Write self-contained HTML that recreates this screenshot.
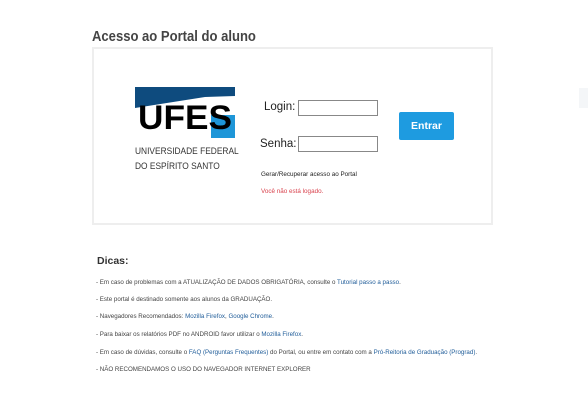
<!DOCTYPE html>
<html><head><meta charset="utf-8"><style>
body{margin:0;background:#fff;font-family:"Liberation Sans",sans-serif;width:588px;height:415px;overflow:hidden;position:relative}
.a{position:absolute}
h1{position:absolute;left:92px;top:28px;margin:0;font-size:15px;font-weight:bold;color:#444;transform:scaleX(0.87);transform-origin:left;white-space:nowrap}
.box{position:absolute;left:92px;top:47px;width:401px;height:178px;border:2px solid #eee;box-sizing:border-box}
.lbl{font-size:11.5px;color:#222}
.inp{position:absolute;width:78px;height:14px;border:1px solid #888;background:#fff}
.btn{position:absolute;left:399px;top:112px;width:55px;height:28px;background:#1e9be0;color:#fff;font-size:10.5px;font-weight:bold;text-align:center;line-height:28px;border-radius:2px}
.t{font-size:6.2px;color:#444;left:96px}
.l{color:#1f5c99}
</style></head><body>
<h1>Acesso ao Portal do aluno</h1>
<div class="box"></div>
<svg class="a" style="left:135px;top:87px" width="100" height="52" viewBox="0 0 100 52">
<polygon points="0,0 100,0 100,9 70,10 0,21" fill="#0e4b7e"/>
<polygon points="76,28 100,28 100,51 76,51" fill="#1e96d8"/>
<text x="3" y="42" font-family="Liberation Sans" font-weight="bold" font-size="34" fill="#000" textLength="94" lengthAdjust="spacingAndGlyphs">UFES</text>
</svg>
<div class="a" style="left:135px;top:144px;font-size:9.3px;color:#333;line-height:15px;transform:scaleX(0.9);transform-origin:left;white-space:nowrap">UNIVERSIDADE FEDERAL<br>DO ESPÍRITO SANTO</div>
<div class="a lbl" style="left:264px;top:101px">Login:</div>
<div class="inp" style="left:298px;top:100px"></div>
<div class="a lbl" style="left:260px;top:138px">Senha:</div>
<div class="inp" style="left:298px;top:136px"></div>
<div class="btn">Entrar</div>
<div class="a" style="left:261px;top:171px;font-size:6.3px;color:#222">Gerar/Recuperar acesso ao Portal</div>
<div class="a" style="left:261px;top:188px;font-size:6.3px;color:#d9434e">Você não está logado.</div>
<div class="a" style="left:97px;top:255px;font-size:10.5px;font-weight:bold;color:#333">Dicas:</div>
<div class="a t" style="top:279px">- Em caso de problemas com a ATUALIZAÇÃO DE DADOS OBRIGATÓRIA, consulte o <span class="l">Tutorial passo a passo</span>.</div>
<div class="a t" style="top:296px">- Este portal é destinado somente aos alunos da GRADUAÇÃO.</div>
<div class="a t" style="top:313px">- Navegadores Recomendados: <span class="l">Mozilla Firefox</span>, <span class="l">Google Chrome</span>.</div>
<div class="a t" style="top:331px">- Para baixar os relatórios PDF no ANDROID favor utilizar o <span class="l">Mozilla Firefox</span>.</div>
<div class="a t" style="top:349px">- Em caso de dúvidas, consulte o <span class="l">FAQ (Perguntas Frequentes)</span> do Portal, ou entre em contato com a <span class="l">Pró-Reitoria de Graduação (Prograd)</span>.</div>
<div class="a t" style="top:366px">- NÃO RECOMENDAMOS O USO DO NAVEGADOR INTERNET EXPLORER</div>
<div class="a" style="left:579px;top:88px;width:9px;height:20px;background:#f4f6f8"></div>
</body></html>
